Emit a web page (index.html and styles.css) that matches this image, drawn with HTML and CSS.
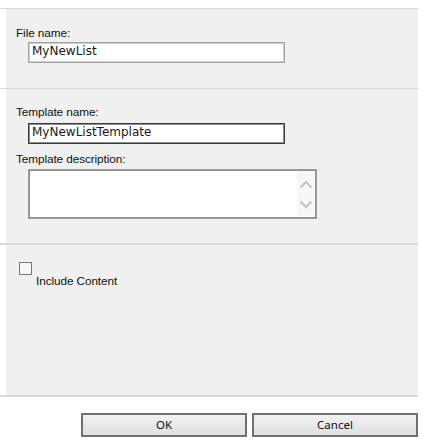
FILE: index.html
```html
<!DOCTYPE html>
<html>
<head>
<meta charset="utf-8">
<link rel="stylesheet" href="styles.css">
</head>
<body>
<div class="dialog">
  <section class="sec sec-1">
    <div class="panel panel-1">
      <div class="label">File name:</div>
      <div class="field field-idle">MyNewList</div>
    </div>
  </section>
  <section class="sec sec-2">
    <div class="panel panel-2">
      <div class="label">Template name:</div>
      <div class="field field-focus">MyNewListTemplate</div>
      <div class="label label-desc">Template description:</div>
      <div class="textarea">
        <div class="ta-body"></div>
        <div class="ta-scroll">
          <svg width="14" height="10" viewBox="0 0 14 10"><path d="M1.5 8.5 L7 3 L12.5 8.5" fill="none" stroke="#c6c6c6" stroke-width="2.4"/></svg>
          <svg width="14" height="10" viewBox="0 0 14 10"><path d="M1.5 1.5 L7 7 L12.5 1.5" fill="none" stroke="#c6c6c6" stroke-width="2.4"/></svg>
        </div>
      </div>
    </div>
  </section>
  <section class="sec sec-3">
    <div class="panel panel-3">
      <div class="check-row">
        <span class="checkbox"></span>
        <span class="check-label">Include Content</span>
      </div>
    </div>
  </section>
  <footer class="buttons">
    <button class="btn">OK</button>
    <button class="btn">Cancel</button>
  </footer>
</div>
</body>
</html>
```

FILE: styles.css
```css
html, body {
  margin: 0;
  padding: 0;
  background: #ffffff;
}
body {
  padding-top: 8px;
  font-family: "Liberation Sans", Arial, sans-serif;
  color: #111111;
}
.dialog {
  width: 418px;
  display: flex;
  flex-direction: column;
}
.sec {
  border-top: 1px solid #dadada;
}
.sec-3 {
  border-top-width: 2px;
  border-bottom: 2px solid #dadada;
}
.panel {
  margin-left: 6px;
  background: #f0f0f0;
  display: flex;
  flex-direction: column;
  align-items: flex-start;
  padding-left: 10px;
  box-sizing: border-box;
}
.panel-1 {
  height: 79px;
  padding-top: 17px;
}
.panel-2 {
  height: 154px;
  padding-top: 16px;
}
.panel-3 {
  height: 150px;
  padding-top: 17px;
  padding-left: 13px;
}
.label {
  font-size: 11.8px;
  line-height: 14px;
  height: 14px;
  letter-spacing: -0.1px;
}
.label-desc {
  margin-top: 8px;
}
.field {
  margin-left: 12px;
  width: 257px;
  height: 21px;
  box-sizing: border-box;
  background: #ffffff;
  font-family: "DejaVu Sans", Verdana, sans-serif;
  font-size: 12px;
  line-height: 17px;
  padding-left: 3px;
  color: #1a1a1a;
}
.panel-1 .field {
  margin-top: 2px;
}
.field-idle {
  border: 1px solid #a2a2a2;
  box-shadow: inset 0 0 0 1px #cfcfcf;
}
.field-focus {
  margin-top: 4px;
  border: 1px solid #3a3a3a;
  box-shadow: inset 0 0 0 1px #8e8e8e;
}
.textarea {
  margin-top: 3px;
  margin-left: 12px;
  width: 289px;
  height: 50px;
  box-sizing: border-box;
  border: 1px solid #a0a0a0;
  box-shadow: inset 0 0 0 1px #8c8c8c;
  background: #ffffff;
  display: flex;
  padding: 2px 2px 2px 2px;
}
.ta-body {
  flex: 1;
}
.ta-scroll {
  width: 17px;
  background: #f7f7f7;
  display: flex;
  flex-direction: column;
  align-items: center;
  justify-content: space-between;
  padding: 7px 0 6px;
  box-sizing: border-box;
}
.ta-scroll svg {
  display: block;
}
.check-row {
  display: flex;
  align-items: flex-start;
}
.checkbox {
  width: 13px;
  height: 13px;
  box-sizing: border-box;
  border: 1px solid #777777;
  background: #f7f7f7;
}
.check-label {
  font-size: 11.8px;
  line-height: 14px;
  letter-spacing: -0.1px;
  margin-left: 4px;
  margin-top: 12px;
}
.buttons {
  display: flex;
  justify-content: flex-end;
  gap: 5px;
  padding-top: 16px;
}
.btn {
  width: 166px;
  height: 24px;
  margin: 0;
  padding: 0;
  box-sizing: border-box;
  border: 2px solid #707070;
  background: linear-gradient(#f2f2f2, #e0e0e0);
  font-family: "Noto Sans", "Open Sans", sans-serif;
  font-size: 11.5px;
  color: #111;
  line-height: 18px;
}
```
